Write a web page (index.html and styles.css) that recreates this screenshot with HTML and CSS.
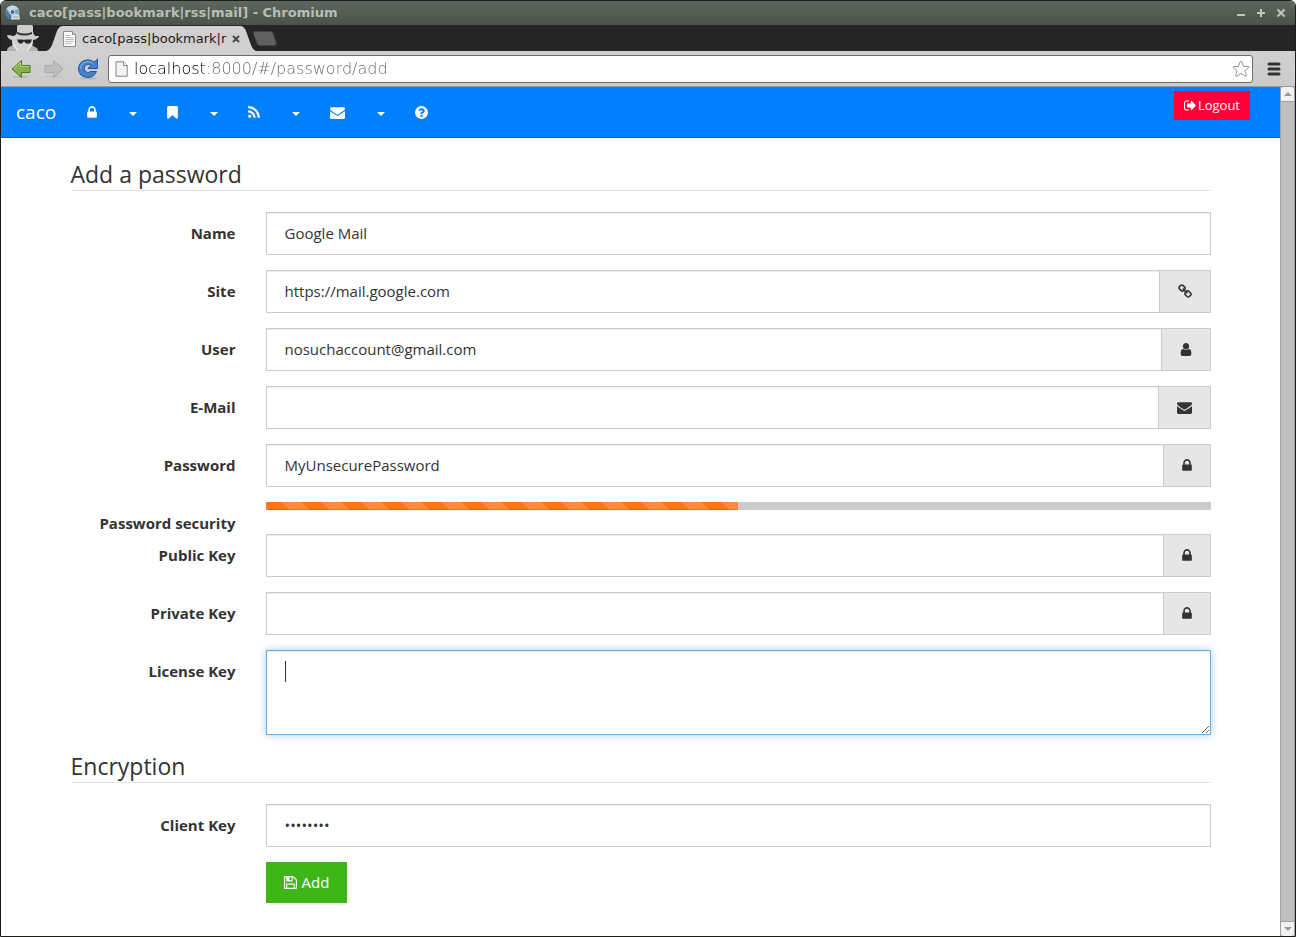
FILE: index.html
```html
<!DOCTYPE html>
<html lang="en">
<head>
<meta charset="utf-8">
<title>caco[pass|bookmark|rss|mail]</title>
<link rel="stylesheet" href="styles.css">
</head>
<body>
<svg class="sprite" aria-hidden="true">
  <symbol id="lock" viewBox="320 0 1152 1792"><path d="M640 768h512v-192q0-106-75-181t-181-75-181 75-75 181v192zm832 96v576q0 40-28 68t-68 28h-960q-40 0-68-28t-28-68v-576q0-40 28-68t68-28h32v-192q0-184 132-316t316-132 316 132 132 316v192h32q40 0 68 28t28 68z"/></symbol>
  <symbol id="bookmark" viewBox="256 0 1280 1792"><path d="M1420 128q23 0 44 9 33 13 52.500 41t19.500 62v1289q0 34-19.500 62t-52.500 41q-19 8-44 8-48 0-83-32l-441-424-441 424q-36 33-83 33-23 0-44-9-33-13-52.500-41t-19.500-62v-1289q0-34 19.500-62t52.500-41q21-9 44-9h1048z"/></symbol>
  <symbol id="rss" viewBox="192 0 1408 1792"><path d="M576 1344q0 80-56 136t-136 56-136-56-56-136 56-136 136-56 136 56 56 136zm512 123q2 28-17 48-18 21-47 21h-135q-25 0-43-16.500t-20-41.500q-22-229-184.500-391.500t-391.500-184.500q-25-2-41.500-20t-16.500-43v-135q0-29 21-47 17-17 43-17h5q160 13 306 80.500t259 181.500q114 113 181.500 259t80.500 306zm512 2q2 27-18 47-18 20-46 20h-143q-26 0-44.500-17.500t-19.500-42.500q-12-215-101-408.500t-231.500-336-336-231.500-408.500-102q-25-1-42.500-19.500t-17.500-43.500v-143q0-28 20-46 18-18 44-18h3q262 13 501.500 120t425.500 294q187 186 294 425.500t120 501.500z"/></symbol>
  <symbol id="envelope" viewBox="0 0 1792 1792"><path d="M1792 710v794q0 66-47 113t-113 47h-1472q-66 0-113-47t-47-113v-794q44 49 101 87 362 246 497 345 57 42 92.500 65.500t94.500 48 110 24.500h2q51 0 110-24.500t94.500-48 92.500-65.500q170-123 498-345 57-39 100-87zm0-294q0 79-49 151t-122 123q-376 261-468 325-10 7-42.500 31t-54 38.500-52 32.500-57.500 27-50 9h-2q-23 0-50-9t-57.500-27-52-32.500-54-38.500-42.500-31q-91-64-262-182.500t-205-142.500q-62-42-117-115.500t-55-136.500q0-78 41.500-130t118.500-52h1472q65 0 112.500 47t47.500 113z"/></symbol>
  <symbol id="help" viewBox="128 0 1536 1792"><path d="M1024 1376v-192q0-14-9-23t-23-9h-192q-14 0-23 9t-9 23v192q0 14 9 23t23 9h192q14 0 23-9t9-23zm256-672q0-88-55.500-163t-138.500-116-170-41q-243 0-371 213-15 24 8 42l132 100q7 6 19 6 16 0 25-12 53-68 86-92 34-24 86-24 48 0 85.500 26t37.500 59q0 38-20 61t-68 45q-63 28-115.500 86.500t-52.500 125.500v36q0 14 9 23t23 9h192q14 0 23-9t9-23q0-19 21.500-49.500t54.500-49.500q32-18 49-28.500t46-35 44.500-48 28-60.500 12.500-81zm384 192q0 209-103 385.500t-279.500 279.500-385.500 103-385.500-103-279.500-279.500-103-385.500 103-385.500 279.500-279.500 385.500-103 385.500 103 279.500 279.500 103 385.500z"/></symbol>
  <symbol id="signout" viewBox="64 0 1568 1792"><path d="M704 1440q0 4 1 20t.5 26.500-3 23.500-10 19.500-20.500 6.500h-320q-119 0-203.500-84.500t-84.500-203.500v-704q0-119 84.500-203.500t203.500-84.500h320q13 0 22.500 9.500t9.500 22.500q0 4 1 20t.5 26.500-3 23.500-10 19.500-20.500 6.500h-320q-66 0-113 47t-47 113v704q0 66 47 113t113 47h312l11.500 1 11.500 3 8 5.500 7 9 2 13.500zm928-544q0 26-19 45l-544 544q-19 19-45 19t-45-19-19-45v-288h-448q-26 0-45-19t-19-45v-384q0-26 19-45t45-19h448v-288q0-26 19-45t45-19 45 19l544 544q19 19 19 45z"/></symbol>
  <symbol id="user" viewBox="256 0 1280 1792"><path d="M1536 1399q0 109-62.500 187t-150.500 78h-854q-88 0-150.500-78t-62.500-187q0-85 8.500-160.500t31.500-152 58.500-131 94-89 134.500-34.500q131 128 313 128t313-128q76 0 134.500 34.500t94 89 58.500 131 31.500 152 8.500 160.500zm-256-887q0 159-112.500 271.500t-271.500 112.500-271.500-112.500-112.500-271.500 112.500-271.500 271.500-112.500 271.500 112.500 112.500 271.500z"/></symbol>
  <symbol id="link" viewBox="80 0 1632 1792"><path d="M1520 1216q0-40-28-68l-208-208q-28-28-68-28-42 0-72 32 3 3 19 18.500t21.500 21.500 15 19 13 25.500 3.500 27.500q0 40-28 68t-68 28q-15 0-27.500-3.500t-25.500-13-19-15-21.500-21.500-18.500-19q-33 31-33 73 0 40 28 68l206 207q27 27 68 27 40 0 68-26l147-146q28-28 28-67zm-703-705q0-40-28-68l-206-207q-28-28-68-28-39 0-68 27l-147 146q-28 28-28 67 0 40 28 68l208 208q27 27 68 27 42 0 72-31-3-3-19-18.500t-21.500-21.500-15-19-13-25.500-3.500-27.500q0-40 28-68t68-28q15 0 27.500 3.500t25.500 13 19 15 21.500 21.500 18.500 19q33-31 33-73zm895 705q0 120-85 203l-147 146q-83 83-203 83-121 0-204-85l-206-207q-83-83-83-203 0-123 88-209l-88-88q-86 88-208 88-120 0-204-84l-208-208q-84-84-84-204t85-203l147-146q83-83 203-83 121 0 204 85l206 207q83 83 83 203 0 123-88 209l88 88q86-88 208-88 120 0 204 84l208 208q84 84 84 204z"/></symbol>
  <symbol id="floppy" viewBox="128 0 1536 1792"><path d="M512 1536h768v-384h-768v384zm896 0h128v-896q0-14-10-38.500t-20-34.500l-281-281q-10-10-34-20t-39-10v416q0 40-28 68t-68 28h-576q-40 0-68-28t-28-68v-416h-128v1280h128v-416q0-40 28-68t68-28h832q40 0 68 28t28 68v416zm-384-928v-320q0-13-9.500-22.500t-22.500-9.500h-192q-13 0-22.500 9.500t-9.500 22.500v320q0 13 9.500 22.500t22.500 9.500h192q13 0 22.500-9.500t9.500-22.500zm640 32v928q0 40-28 68t-68 28h-1344q-40 0-68-28t-28-68v-1344q0-40 28-68t68-28h928q40 0 88 20t76 48l280 280q28 28 48 76t20 88z"/></symbol>
</svg>

<div class="window">
  <header class="titlebar">
    <svg class="app-icon" viewBox="0 0 16 16" aria-hidden="true">
      <circle cx="7.500" cy="7.500" r="7" fill="#7fa3c2"/>
      <path d="M7.500.5a7 7 0 0 1 6.300 4H7.500a3.500 3.500 0 0 0-3.300 2.500L1.500 4A7 7 0 0 1 7.500.5z" fill="#c3d8e8"/>
      <path d="M1.300 4.200 4.500 9a3.500 3.500 0 0 0 3 2l-1.500 3.400A7 7 0 0 1 1.300 4.200z" fill="#4b78a6"/>
      <circle cx="7.500" cy="7" r="2.500" fill="#3c6a9c" stroke="#e6eef4"/>
      <path d="M7 9h7l1 5.500H6z" fill="#d3dbdf"/>
      <path d="M8.500 9.500V8q2-2.500 4 0v1.500M8 12h5" fill="none" stroke="#8fa0aa"/>
    </svg>
    <span class="title">caco[pass|bookmark|rss|mail] - Chromium</span>
    <div class="window-controls">
      <button type="button" aria-label="Minimize"><svg viewBox="0 0 10 10"><path d="M1 7h8"/></svg></button>
      <button type="button" aria-label="Maximize"><svg viewBox="0 0 10 10"><path d="M1 5h8M5 1v8"/></svg></button>
      <button type="button" aria-label="Close"><svg viewBox="0 0 10 10"><path d="M1.500 1.500l7 7M8.500 1.500l-7 7"/></svg></button>
    </div>
  </header>

  <div class="tabstrip">
    <svg class="incognito" viewBox="0 0 34 26" aria-hidden="true">
      <path d="M1 26q0-3 2-4l6-3h15l5 3q3 1 3 4z" fill="#b4b4b4"/>
      <path d="M6 13h21v5q-2 5-7 8h-7q-5-3-7-8z" fill="#d2d2d2"/>
      <path d="M1 10q3 0 6 1 3 0 4-4V1q0-1 2-1h13q1 0 1 2v5q1 4 3 4h3q-1 3-6 4-10-3-20 0-5 0-6-5z" fill="#cdcdcd"/>
      <path d="M11 7q8 3 15 0v2q-8 3-15 0z" fill="#343434"/>
      <path d="M11 14.500h6l1 .8 1-.8h7q-1 4.200-4 4.200-2.500 0-4-2.500-1.500 2.500-4 2.500-2-.5-3-4.200z" fill="#292929"/>
      <path d="M7 19l5 7M26 19l-5 7" stroke="#ececec" stroke-width="1.500" fill="none"/>
    </svg>
    <div class="tab">
      <svg class="tab-shape" viewBox="0 0 210 25" preserveAspectRatio="none" aria-hidden="true"><path d="M0 25q4-1 6-6L11 5q2-5 6-5h177q4 0 6 5l5 14q2 5 5 6z" fill="#d0d0d0"/></svg>
      <svg class="page-icon" viewBox="0 0 13 16" aria-hidden="true"><path d="M.5.5h9l3 3v12H.5z" fill="#fafafa" stroke="#8d8d8d"/><path d="M9.500.5v3h3" fill="#ddd" stroke="#8d8d8d"/><path d="M2.500 4.500h5M2.500 6.500h8M2.500 8.500h8M2.500 10.500h8M2.500 12.500h6" stroke="#bbb"/></svg>
      <span class="tab-title">caco[pass|bookmark|r</span>
      <button class="tab-close" type="button" aria-label="Close tab"><svg viewBox="0 0 8 8"><path d="M1 1l6 6M7 1L1 7"/></svg></button>
    </div>
    <button class="new-tab" type="button" aria-label="New tab"><svg viewBox="0 0 25 15"><path d="M3 .5h15q2 0 3 2l3 9q1 3-2 3H8q-2 0-3-2L1.500 3Q.5.500 3 .5z" fill="#606060" stroke="#444"/></svg></button>
  </div>

  <div class="toolbar">
    <button class="tool" type="button" aria-label="Back"><svg viewBox="0 0 20 20"><ellipse cx="10" cy="18" rx="8" ry="1" fill="#b8b8b8"/><path d="M1 10 10.500 1.500v5H19v7h-8.500v5z" fill="#86b04a" stroke="#4b7a1f"/><path d="M3 9.500l6.500-6v4H18" fill="none" stroke="#b5d48a"/></svg></button>
    <button class="tool" type="button" aria-label="Forward" disabled><svg viewBox="0 0 20 20"><ellipse cx="10" cy="18" rx="8" ry="1" fill="#c4c4c4"/><path d="M19 10 9.500 1.500v5H1v7h8.500v5z" fill="#bdbdbb" stroke="#a9a9a7"/></svg></button>
    <button class="tool reload" type="button" aria-label="Reload"><svg viewBox="0 0 22 22"><ellipse cx="11" cy="20.500" rx="9" ry="1" fill="#b5b5b5"/><path d="M17 4.200 20.500 1v9.500h-9.500l3-3.200q-3-2-5.500 0-2.500 2.700-.6 5.700 2.600 3 6.100.5h5.500Q17 19.500 11 19.500 1.500 19 1.500 10.500 2 2.500 11 1.800q3.500 0 6 2.400z" fill="#4480cc" stroke="#2458a0"/><path d="M3.500 11Q4 4 11 3.500q3 0 5.500 2.500" fill="none" stroke="#8fb8ea"/></svg></button>
    <div class="omnibox">
      <svg class="url-icon" viewBox="0 0 13 16" aria-hidden="true"><path d="M1 .8h7.500l3.700 3.700v10.700H1z" fill="#f4f4f4" stroke="#858585"/><path d="M8.500.8v3.700h3.700" fill="#fff" stroke="#858585"/></svg>
      <input class="url" type="text" aria-label="Address" value="localhost:8000/#/password/add">
      <button class="star" type="button" aria-label="Bookmark this page"><svg viewBox="0 0 20 20"><path d="M10 1.500q1 0 1.300 1l1.500 4.700H18q1.800.3.500 1.500l-4.100 3.200 1.500 5q.2 1.600-1.400 1L10 14.800l-4.500 3.100q-1.600.6-1.400-1l1.500-5L1.500 8.700Q.2 7.500 2 7.200h5.200l1.500-4.700q.3-1 1.300-1z"/></svg></button>
    </div>
    <button class="menu" type="button" aria-label="Menu"><svg viewBox="0 0 14 14"><path d="M2 2h10M2 7h10M2 12h10"/></svg></button>
  </div>

  <div class="viewport">
    <div class="page">
      <nav class="navbar">
        <a class="brand" href="#/">caco</a>
        <a class="nav-link" href="#/password" aria-label="Passwords"><svg class="icon w10"><use href="#lock"/></svg></a>
        <a class="nav-link" href="#/password/add" aria-label="Password menu"><span class="caret"></span></a>
        <a class="nav-link" href="#/bookmark" aria-label="Bookmarks"><svg class="icon w11"><use href="#bookmark"/></svg></a>
        <a class="nav-link" href="#/bookmark/add" aria-label="Bookmark menu"><span class="caret"></span></a>
        <a class="nav-link" href="#/rss" aria-label="Feeds"><svg class="icon w12"><use href="#rss"/></svg></a>
        <a class="nav-link" href="#/rss/add" aria-label="Feed menu"><span class="caret"></span></a>
        <a class="nav-link" href="#/mail" aria-label="Mail"><svg class="icon w15"><use href="#envelope"/></svg></a>
        <a class="nav-link" href="#/mail/add" aria-label="Mail menu"><span class="caret"></span></a>
        <a class="nav-link" href="#/help" aria-label="Help"><svg class="icon w13"><use href="#help"/></svg></a>
        <button class="logout" type="button"><svg class="icon w12"><use href="#signout"/></svg>Logout</button>
      </nav>

      <form class="container">
        <fieldset>
          <legend>Add a password</legend>
          <div class="row"><label for="name">Name</label><div class="field"><input id="name" type="text" value="Google Mail"></div></div>
          <div class="row"><label for="site">Site</label><div class="field"><input id="site" type="text" value="https://mail.google.com"><span class="addon"><svg class="icon w14"><use href="#link"/></svg></span></div></div>
          <div class="row"><label for="user-name">User</label><div class="field"><input id="user-name" type="text" value="nosuchaccount@gmail.com"><span class="addon"><svg class="icon w12"><use href="#user"/></svg></span></div></div>
          <div class="row"><label for="email">E-Mail</label><div class="field"><input id="email" type="text"><span class="addon"><svg class="icon w15"><use href="#envelope"/></svg></span></div></div>
          <div class="row"><label for="password">Password</label><div class="field"><input id="password" type="text" value="MyUnsecurePassword"><span class="addon"><svg class="icon w10"><use href="#lock"/></svg></span></div></div>
          <div class="row meter-row"><span class="label" id="security">Password security</span><div class="progress" role="progressbar" aria-labelledby="security" aria-valuenow="50" aria-valuemin="0" aria-valuemax="100"><div class="bar" style="width: 50%"></div></div></div>
          <div class="row"><label for="public">Public Key</label><div class="field"><input id="public" type="text"><span class="addon"><svg class="icon w10"><use href="#lock"/></svg></span></div></div>
          <div class="row"><label for="private">Private Key</label><div class="field"><input id="private" type="text"><span class="addon"><svg class="icon w10"><use href="#lock"/></svg></span></div></div>
          <div class="row"><label for="license">License Key</label><div class="field"><textarea id="license" class="active" rows="3"></textarea></div></div>
        </fieldset>
        <fieldset>
          <legend>Encryption</legend>
          <div class="row"><label for="client">Client Key</label><div class="field"><input id="client" type="password" value="password"></div></div>
          <div class="row"><button class="add" type="submit"><svg class="icon w13"><use href="#floppy"/></svg>Add</button></div>
        </fieldset>
      </form>
    </div>
    <div class="scrollbar">
      <button class="scroll-up" type="button" aria-label="Scroll up"><svg viewBox="0 0 8 4"><path d="M4 0l4 4H0z"/></svg></button>
      <button class="scroll-down" type="button" aria-label="Scroll down"><svg viewBox="0 0 8 4"><path d="M0 0h8L4 4z"/></svg></button>
    </div>
  </div>
</div>
</body>
</html>
```

FILE: styles.css
```css
* { box-sizing: border-box; }
body {
  margin: 0;
  background: #fff;
  color: #333;
  font: 15px/21px "Open Sans", "Noto Sans", sans-serif;
}
button { margin: 0; padding: 0; border: 0; background: none; font: inherit; color: inherit; }
svg { display: block; }
.sprite { position: absolute; width: 0; height: 0; }
.window {
  display: flex;
  flex-direction: column;
  min-height: 100vh;
  border: 1px solid #1c1d18;
  border-radius: 6px 6px 0 0;
  background: #fff;
  overflow: hidden;
}

/* Window title */
.titlebar {
  display: flex;
  align-items: center;
  height: 24px;
  padding: 0 9px 0 4px;
  background: linear-gradient(#5e675d, #4a5249);
  color: #b9beb5;
  font: bold 13px/24px "DejaVu Sans", sans-serif;
}
.app-icon { width: 16px; height: 16px; }
.title { flex: 1; padding-left: 8px; }
.window-controls { display: flex; gap: 10px; }
.window-controls svg { width: 10px; height: 10px; fill: none; stroke: #c0c5bd; stroke-width: 2; }

/* Tabs */
.tabstrip {
  display: flex;
  align-items: flex-end;
  height: 26px;
  padding-left: 5px;
  background: #252525;
}
.incognito { width: 34px; height: 26px; }
.tab {
  position: relative;
  display: flex;
  align-items: center;
  width: 210px;
  height: 25px;
  margin-left: 6px;
  padding: 0 16px 0 17px;
  color: #1a1a1a;
  font: 13px/26px "DejaVu Sans", sans-serif;
}
.tab > * { position: relative; }
.tab > .tab-shape { position: absolute; inset: 0; width: 100%; height: 100%; }
.page-icon { width: 13px; height: 16px; flex: none; }
.tab-title { flex: 1; min-width: 0; padding-left: 6px; white-space: nowrap; }
.tab-close svg { width: 8px; height: 8px; stroke: #4a4a4a; stroke-width: 2; }
.new-tab { align-self: center; margin-left: -4px; }
.new-tab svg { width: 25px; height: 15px; }

/* Toolbar */
.toolbar {
  display: flex;
  align-items: center;
  height: 36px;
  padding: 0 14px 0 10px;
  border-bottom: 1px solid #9b9b9b;
  background: linear-gradient(#d0d0d0, #cbcbcb);
}
.tool { margin-right: 13px; }
.tool svg { width: 20px; height: 20px; }
.tool.reload { margin-right: 9px; }
.tool.reload svg { width: 22px; height: 22px; }
.omnibox {
  display: flex;
  align-items: center;
  flex: 1;
  height: 28px;
  padding: 0 2px 0 6px;
  border: 1px solid #6d6d6d;
  border-radius: 3px;
  background: #fff;
}
.url-icon { width: 13px; height: 16px; }
.url {
  flex: 1;
  min-width: 0;
  height: 24px;
  padding: 0 0 0 6px;
  border: 0;
  outline: 0;
  color: #666;
  font: 200 16px/24px "DejaVu Sans", sans-serif;
  background: linear-gradient(to right, #000 79px, #666 79px) text;
  -webkit-text-fill-color: transparent;
}
.star svg { width: 18px; height: 18px; fill: #fff; stroke: #888; }
.menu { margin-left: 14px; }
.menu svg { width: 14px; height: 14px; stroke: #333; stroke-width: 3; stroke-linecap: round; }

/* Page area */
.viewport { display: flex; flex: 1; }
.page { flex: 1; min-width: 0; }
.scrollbar {
  display: flex;
  flex-direction: column;
  justify-content: space-between;
  width: 15px;
  border: solid #a0a0a0;
  border-width: 0 1px;
  background: #bfbfbf;
}
.scrollbar button {
  display: flex;
  align-items: center;
  justify-content: center;
  height: 15px;
  background: #f2f2f2;
}
.scroll-up { border-bottom: 1px solid #a0a0a0; border-radius: 3px 3px 0 0; }
.scroll-down { border-top: 1px solid #a0a0a0; border-radius: 0 0 3px 3px; }
.scrollbar svg { width: 8px; height: 4px; fill: #999; }

.icon { height: 15px; fill: currentColor; }
.w10 { width: 10px; }
.w11 { width: 11px; }
.w12 { width: 12px; }
.w13 { width: 13px; }
.w14 { width: 14px; }
.w15 { width: 15px; }

/* Navigation */
.navbar {
  display: flex;
  align-items: center;
  height: 51px;
  padding-right: 30px;
  border-bottom: 1px solid #0066cc;
  background: #007fff;
  color: #fff;
}
.brand { padding: 0 16px 0 15px; color: #fff; font-size: 19px; text-decoration: none; }
.nav-link { padding: 17px 15px; color: #fff; }
.caret {
  display: block;
  margin: 3px 0 0 2px;
  border: 4px solid transparent;
  border-top-color: #fff;
  border-bottom: 0;
}
.logout {
  display: flex;
  align-items: center;
  align-self: flex-start;
  gap: 2px;
  height: 29px;
  margin: 4px 0 0 auto;
  padding: 0 10px;
  background: #ff0039;
  font-size: 13px;
}

/* Form */
.container { max-width: 1140px; margin: 0 auto; padding: 20px 0 0; }
fieldset { min-width: 0; margin: 0; padding: 0; border: 0; }
legend {
  display: block;
  width: 100%;
  margin-bottom: 21px;
  padding: 0;
  border-bottom: 1px solid #e5e5e5;
  font-size: 23px;
  line-height: 32px;
}
.row { display: grid; grid-template-columns: 165px 1fr; column-gap: 30px; margin-bottom: 15px; }
.row label, .label { padding-top: 11px; font-weight: bold; text-align: right; }
.field { display: flex; min-width: 0; }
.field input, .field textarea {
  flex: 1;
  min-width: 0;
  height: 43px;
  padding: 9px 18px 11px;
  border: 1px solid #ccc;
  border-radius: 0;
  outline: 0;
  background: #fff;
  box-shadow: inset 0 1px 1px rgba(0, 0, 0, .075);
  color: #333;
  font: inherit;
}
.field input:not(:last-child) { border-right: 0; }
.field textarea { height: 85px; resize: vertical; }
.field textarea.active {
  border-color: #66afe9;
  background: linear-gradient(#333, #333) 18px 10px / 1px 21px no-repeat #fff;
  box-shadow: inset 0 1px 1px rgba(0, 0, 0, .075), 0 0 8px rgba(102, 175, 233, .6);
  caret-color: transparent;
}
.addon { display: flex; align-items: center; padding: 0 18px; border: 1px solid #ccc; background: #e6e6e6; }
.meter-row { margin-bottom: 0; }
.progress { height: 8px; background: #ccc; }
.bar {
  height: 8px;
  background-color: #ff7518;
  background-image: linear-gradient(45deg, rgba(255, 255, 255, .15) 25%, transparent 25%, transparent 50%, rgba(255, 255, 255, .15) 50%, rgba(255, 255, 255, .15) 75%, transparent 75%);
  background-position: 16px 0;
  background-size: 40px 40px;
  box-shadow: inset 0 -1px 0 rgba(0, 0, 0, .15);
}
.add {
  display: flex;
  grid-column: 2;
  align-items: center;
  justify-self: start;
  gap: 5px;
  height: 41px;
  padding: 0 18px;
  background: #3fb618;
  color: #fff;
}
```
